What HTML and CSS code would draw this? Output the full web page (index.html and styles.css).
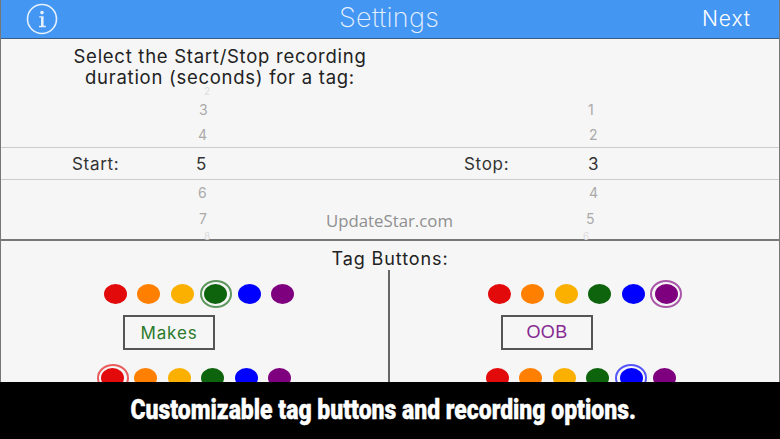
FILE: index.html
```html
<!DOCTYPE html>
<html lang="en">
   <head>
      <title>Settings</title>
      <link rel="stylesheet" href="styles.css">
   </head>
   <body>
      <div class="screen">
         <div class="bar">
            <svg class="info" width="32" height="32" viewBox="0 0 32 32">
               <circle cx="16" cy="16" r="14.5" fill="none" stroke="#e6f1fe" stroke-width="1.6"/>
               <circle cx="16" cy="9.6" r="1.8" fill="#e6f1fe"/>
               <path d="M13.2 13.2h4.4v9.6h2.2v1.4h-6.8v-1.4h2v-8.2h-1.8z" fill="#e6f1fe"/>
            </svg>
            <div class="title">Settings</div>
            <div class="next">Next</div>
         </div>

         <div class="duration">
            <div class="ask">Select the Start/Stop recording<br>duration (seconds) for a tag:</div>
            <div class="rows upper">
               <div class="far left-a">2</div><div class="far right-a"></div>
               <div class="near left-b">3</div><div class="near right-b">1</div>
               <div class="near left-c">4</div><div class="near right-c">2</div>
            </div>
            <div class="band">
               <div class="pick"><span class="pick-name">Start:</span><span class="pick-val">5</span></div>
               <div class="pick"><span class="pick-name">Stop:</span><span class="pick-val">3</span></div>
            </div>
            <div class="rows lower">
               <div class="near left-c">6</div><div class="near right-c">4</div>
               <div class="near left-b">7</div><div class="near right-d">5</div>
               <div class="far left-a">8</div><div class="far right-e">6</div>
            </div>
         </div>

         <div class="tags">
            <div class="tags-head">Tag Buttons:</div>
            <div class="tags-cols">
               <div class="col col-left">
                  <div class="dots dots-a">
                     <span class="dot red"></span><span class="dot orange"></span><span class="dot yellow"></span><span class="dot green on"></span><span class="dot blue"></span><span class="dot purple"></span>
                  </div>
                  <div class="tag-box makes">Makes</div>
                  <div class="dots dots-b">
                     <span class="dot red on"></span><span class="dot orange"></span><span class="dot yellow"></span><span class="dot green"></span><span class="dot blue"></span><span class="dot purple"></span>
                  </div>
               </div>
               <div class="col col-right">
                  <div class="dots dots-a">
                     <span class="dot red"></span><span class="dot orange"></span><span class="dot yellow"></span><span class="dot green"></span><span class="dot blue"></span><span class="dot purple on"></span>
                  </div>
                  <div class="tag-box oob">OOB</div>
                  <div class="dots dots-b">
                     <span class="dot red"></span><span class="dot orange"></span><span class="dot yellow"></span><span class="dot green"></span><span class="dot blue on"></span><span class="dot purple"></span>
                  </div>
               </div>
            </div>
         </div>

         <div class="mark">UpdateStar.com</div>
      </div>
      <div class="caption"><span class="caption-text">Customizable tag buttons and recording options.</span></div>
   </body>
</html>
```

FILE: styles.css
```css
body{
	margin:0;
	padding:0;
	width:780px;
	height:439px;
	overflow:hidden;
	background:#000;
	font-family:Inter,"Liberation Sans",sans-serif;
}
.screen{
	position:relative;
	height:382px;
	overflow:hidden;
	background:#f6f6f6;
	box-sizing:border-box;
	border-left:1px solid #777;
	border-right:1px solid #777;
}

/* top bar */
.bar{
	height:38px;
	background:#4496f3;
	border-bottom:1px solid #3d5b7c;
	display:flex;
	align-items:center;
	color:#fff;
}
.info{
	margin-left:25px;
	flex:none;
}
.title{
	margin-left:281px;
	padding-bottom:4px;
	font-weight:200;
	font-size:27px;
	letter-spacing:.3px;
	color:#e6f1fe;
	width:101px;
	white-space:nowrap;
}
.next{
	margin-left:262px;
	padding-bottom:1px;
	font-weight:300;
	font-size:21px;
	letter-spacing:.9px;
}

/* start / stop pickers */
.duration{
	height:200px;
	border-bottom:2px solid #777;
	color:#333;
}
.ask{
	box-sizing:border-box;
	padding-top:7px;
	height:46px;
	width:438px;
	text-align:center;
	font-size:18.5px;
	line-height:21px;
	letter-spacing:.73px;
	color:#222;
}
.rows{
	display:grid;
	grid-template-columns:392px 1fr;
	font-size:14px;
	color:#aaa;
	align-items:center;
	overflow:hidden;
}
.upper{
	grid-template-rows:12px 25px 25px;
	height:62px;
}
.lower{
	grid-template-rows:25px 26px 9px;
	height:60px;
}
.far{
	color:#ddd;
	font-size:10px;
	line-height:10px;
}
.lower .far{
	align-self:start;
}
.left-a{padding-left:203px;}
.left-b{padding-left:198px;}
.left-c{padding-left:197px;}
.right-a{padding-left:195px;}
.right-b{padding-left:195px;}
.right-c{padding-left:196px;}
.right-d{padding-left:193px;}
.right-e{padding-left:190px;}
.band{
	height:31px;
	border-top:1px solid #ccc;
	border-bottom:1px solid #ccc;
	display:grid;
	grid-template-columns:392px 1fr;
	align-items:center;
	font-size:17px;
}
.pick{
	display:flex;
}
.pick-name{
	margin-left:71px;
	width:124px;
	letter-spacing:.7px;
}

/* tag buttons */
.tags{
	height:142px;
}
.tags-head{
	height:29px;
	padding-top:8px;
	box-sizing:border-box;
	text-align:center;
	font-size:18px;
	line-height:20px;
	letter-spacing:.9px;
	color:#222;
}
.tags-cols{
	display:grid;
	grid-template-columns:389px 389px;
}
.col{
	height:120px;
}
.col-left{
	border-right:2px solid #666;
}
.dots{
	display:flex;
	align-items:center;
	gap:10.4px;
	height:20px;
}
.dots-a{
	margin-top:14px;
}
.dots-b{
	margin-top:18px;
}
.col-left .dots-a{padding-left:103px;}
.col-left .dots-b{padding-left:100px;}
.col-right .dots-a{padding-left:98px;}
.col-right .dots-b{padding-left:96px;}
.dot{
	position:relative;
	display:block;
	width:23px;
	height:20px;
	border-radius:50%;
}
.dot.on:after{
	content:'';
	position:absolute;
	top:-4px;
	left:-4.5px;
	right:-4.5px;
	bottom:-4px;
	border-radius:50%;
	border:2px solid;
	opacity:.65;
}
.red{background:#e20a0a;color:#e20a0a;}
.orange{background:#ff8000;color:#ff8000;}
.yellow{background:#fbb000;color:#fbb000;}
.green{background:#0d640d;color:#0d640d;}
.blue{background:#0000ff;color:#0000ff;}
.purple{background:#7f007f;color:#7f007f;}
.tag-box{
	width:92px;
	height:35px;
	margin-top:11px;
	box-sizing:border-box;
	border:2px solid #555;
	display:flex;
	align-items:center;
	justify-content:center;
}
.makes{
	margin-left:122px;
	color:#2a7a2a;
	font-size:17px;
	letter-spacing:.9px;
}
.oob{
	margin-left:111px;
	color:#862a92;
	font-family:"Liberation Sans",sans-serif;
	font-size:18px;
	letter-spacing:.3px;
}

.mark{
	position:absolute;
	left:325px;
	top:211px;
	font-family:"Open Sans",sans-serif;
	font-size:16.8px;
	line-height:20px;
	color:#8f8f8f;
}

.caption{
	height:57px;
	box-sizing:border-box;
	padding:0 14px 2px 0;
	display:flex;
	align-items:center;
	justify-content:center;
	color:#fff;
	font-family:Roboto,"Liberation Sans",sans-serif;
	font-weight:900;
	font-size:28px;
	white-space:nowrap;
}
.caption-text{
	display:inline-block;
	transform:scaleX(.82);
	-webkit-text-stroke:.4px #fff;
}
```
